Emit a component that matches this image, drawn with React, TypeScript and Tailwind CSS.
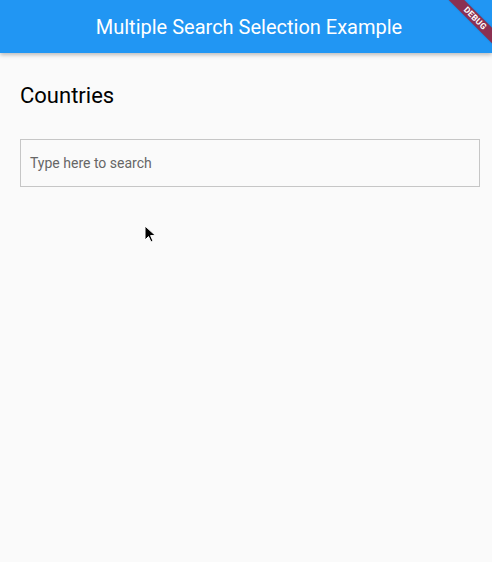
import React from 'react';

export default function App() {
  return (
    <div className="relative w-[492px] h-[562px] overflow-hidden bg-[#fafafa] font-['Roboto',sans-serif]">
      {/* App bar */}
      <div className="h-[53px] bg-[#2196f3] flex items-center justify-center shadow-[0_2px_4px_rgba(0,0,0,0.25)] relative z-10">
        <h1 className="text-white text-[20px] leading-none pl-[6px]">Multiple Search Selection Example</h1>
      </div>

      <div className="pl-5 pr-3 pt-[28px]">
        <h2 className="text-[22px] leading-[30px] font-normal text-black">Countries</h2>
        <div className="mt-[28px] h-[48px] border border-[#c6c6c6] flex items-center px-[9px]">
          <span className="text-[14px] text-[#666666]">Type here to search</span>
        </div>
      </div>

      {/* Debug banner */}
      <div className="absolute left-[443px] top-[12.5px] w-[64px] h-[11px] rotate-45 bg-[#8b3052] z-20 flex items-center justify-center shadow-[0_0_2px_rgba(0,0,0,0.2)]">
        <span className="text-white text-[8.5px] font-bold leading-none tracking-[0.2px]">DEBUG</span>
      </div>

      {/* Mouse cursor */}
      <svg className="absolute left-[144px] top-[225px] z-20" width="13" height="19" viewBox="0 0 13 19">
        <path d="M1 1 L1 15 L4.5 11.5 L7 17 L9 16 L6.6 10.6 L11.5 10.6 Z" fill="#000" stroke="#fff" strokeWidth="1" strokeLinejoin="round" />
      </svg>
    </div>
  );
}
